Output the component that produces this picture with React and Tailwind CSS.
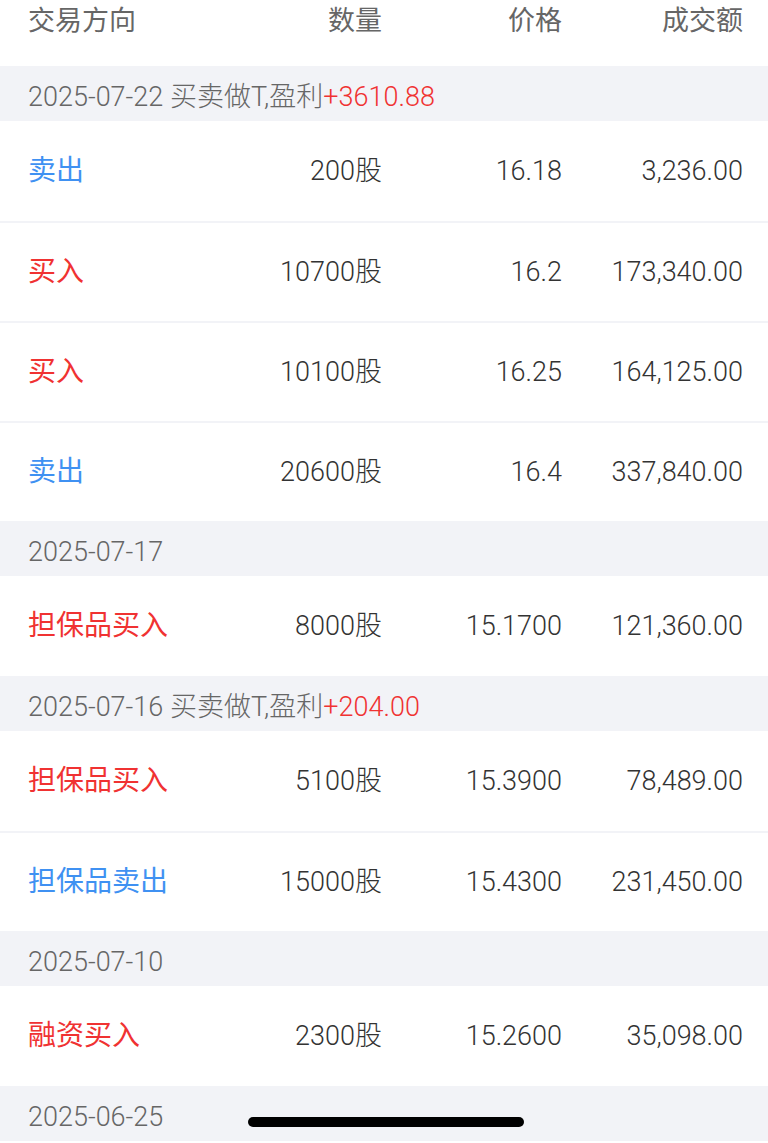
import React from 'react';

const groups = [
    {
        date: '2025-07-22', note: ' 买卖做T,盈利', profit: '+3610.88',
        rows: [
            { dir: '卖出', side: 'sell', qty: '200股', price: '16.18', amount: '3,236.00' },
            { dir: '买入', side: 'buy', qty: '10700股', price: '16.2', amount: '173,340.00' },
            { dir: '买入', side: 'buy', qty: '10100股', price: '16.25', amount: '164,125.00' },
            { dir: '卖出', side: 'sell', qty: '20600股', price: '16.4', amount: '337,840.00' },
        ],
    },
    {
        date: '2025-07-17',
        rows: [
            { dir: '担保品买入', side: 'buy', qty: '8000股', price: '15.1700', amount: '121,360.00' },
        ],
    },
    {
        date: '2025-07-16', note: ' 买卖做T,盈利', profit: '+204.00',
        rows: [
            { dir: '担保品买入', side: 'buy', qty: '5100股', price: '15.3900', amount: '78,489.00' },
            { dir: '担保品卖出', side: 'sell', qty: '15000股', price: '15.4300', amount: '231,450.00' },
        ],
    },
    {
        date: '2025-07-10',
        rows: [
            { dir: '融资买入', side: 'buy', qty: '2300股', price: '15.2600', amount: '35,098.00' },
        ],
    },
    { date: '2025-06-25', rows: [] },
];

const cols = 'grid grid-cols-[174px_180px_180px_181px] pl-[28px] pr-[25px]';

export default function App() {
    return (
        <div className='relative w-[768px] h-[1143px] overflow-hidden bg-white' style={{ fontFamily: 'Roboto, "Noto Sans CJK SC", sans-serif' }}>

            {/* table header */}
            <div className={`${cols} h-[66px] text-[27px] leading-[42px] text-[#666666]`}>
                <div>交易方向</div>
                <div className='text-right'>数量</div>
                <div className='text-right'>价格</div>
                <div className='text-right'>成交额</div>
            </div>

            {groups.map((g) => (
                <div key={g.date}>
                    <div className='h-[55px] flex items-center pl-[28px] pt-[7px] bg-[#f2f3f7] text-[27px] font-light text-[#666666]'>
                        <span>{g.date}{g.note}</span>
                        {g.profit && <span className='text-[#f03232]'>{g.profit}</span>}
                    </div>
                    {g.rows.map((r, i) => (
                        <div key={i} className={`${cols} h-[100px] items-center text-[27px] font-light text-[#333333] ${i > 0 ? 'border-t-2 border-[#f2f3f7]' : ''}`}>
                            <div className={`text-[28px] font-normal ${r.side === 'buy' ? 'text-[#f03232]' : 'text-[#3f91f2]'}`}>{r.dir}</div>
                            <div className='text-right'>{r.qty}</div>
                            <div className='text-right'>{r.price}</div>
                            <div className='text-right'>{r.amount}</div>
                        </div>
                    ))}
                </div>
            ))}

            {/* home indicator */}
            <div className='absolute left-[248px] top-[1117px] w-[276px] h-[10px] rounded-full bg-black'></div>
        </div>
    )
}
